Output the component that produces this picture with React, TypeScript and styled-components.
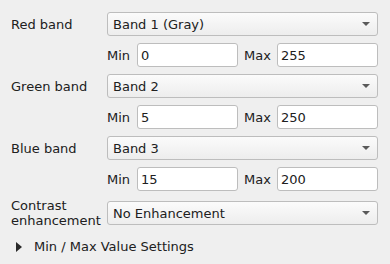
import { Fragment } from "react";
import styled, { createGlobalStyle } from "styled-components";

const GlobalStyle = createGlobalStyle`
  html, body {
    margin: 0;
    padding: 0;
    background: #efefef;
  }
  body {
    font-family: "DejaVu Sans", "Liberation Sans", sans-serif;
    font-size: 13px;
    color: #202020;
  }
`;

const Panel = styled.div`
  width: 390px;
  height: 264px;
  box-sizing: border-box;
  padding: 12px 12px 0 11px;
  background: #efefef;
  overflow: hidden;
`;

const Form = styled.div`
  display: grid;
  grid-template-columns: 96px 1fr;
  row-gap: 7px;
  align-items: center;
`;

const Label = styled.div`
  line-height: 15px;
`;

const Combo = styled.div`
  height: 24px;
  box-sizing: border-box;
  border: 1px solid #bdbdbd;
  border-radius: 3px;
  background: linear-gradient(#fbfbfb, #ededed);
  display: flex;
  align-items: center;
  padding: 0 6px 0 5px;

  span {
    flex: 1;
    white-space: nowrap;
  }
`;

const Arrow = styled.div`
  width: 0;
  height: 0;
  border-left: 4px solid transparent;
  border-right: 4px solid transparent;
  border-top: 4px solid #5a5a5a;
  margin-right: 1px;
`;

const RangeRow = styled.div`
  grid-column: 2;
  display: flex;
  align-items: center;
`;

const RangeLabel = styled.span<{ $gap: number }>`
  margin-right: ${(p) => p.$gap}px;
`;

const Field = styled.div<{ $after?: number }>`
  width: 101px;
  height: 24px;
  box-sizing: border-box;
  border: 1px solid #bdbdbd;
  border-radius: 3px;
  background: #ffffff;
  display: flex;
  align-items: center;
  padding-left: 3px;
  margin-right: ${(p) => p.$after ?? 0}px;
`;

const Disclosure = styled.div`
  display: flex;
  align-items: center;
  margin-top: 8px;
  padding-left: 5px;
  height: 20px;
`;

const Triangle = styled.div`
  width: 0;
  height: 0;
  border-top: 5px solid transparent;
  border-bottom: 5px solid transparent;
  border-left: 6px solid #2a2a2a;
  margin-right: 12px;
  margin-top: 2px;
`;

const bands = [
  { label: "Red band", band: "Band 1 (Gray)", min: "0", max: "255" },
  { label: "Green band", band: "Band 2", min: "5", max: "250" },
  { label: "Blue band", band: "Band 3", min: "15", max: "200" },
];

function App() {
  return (
    <>
      <GlobalStyle />
      <Panel>
        <Form>
          {bands.map((b) => (
            <Fragment key={b.label}>
              <Label>{b.label}</Label>
              <Combo>
                <span>{b.band}</span>
                <Arrow />
              </Combo>
              <RangeRow>
                <RangeLabel $gap={7}>Min</RangeLabel>
                <Field $after={6}>{b.min}</Field>
                <RangeLabel $gap={6}>Max</RangeLabel>
                <Field>{b.max}</Field>
              </RangeRow>
            </Fragment>
          ))}
          <Label>
            Contrast
            <br />
            enhancement
          </Label>
          <Combo>
            <span>No Enhancement</span>
            <Arrow />
          </Combo>
        </Form>
        <Disclosure>
          <Triangle />
          <span>Min / Max Value Settings</span>
        </Disclosure>
      </Panel>
    </>
  );
}

export default App;
